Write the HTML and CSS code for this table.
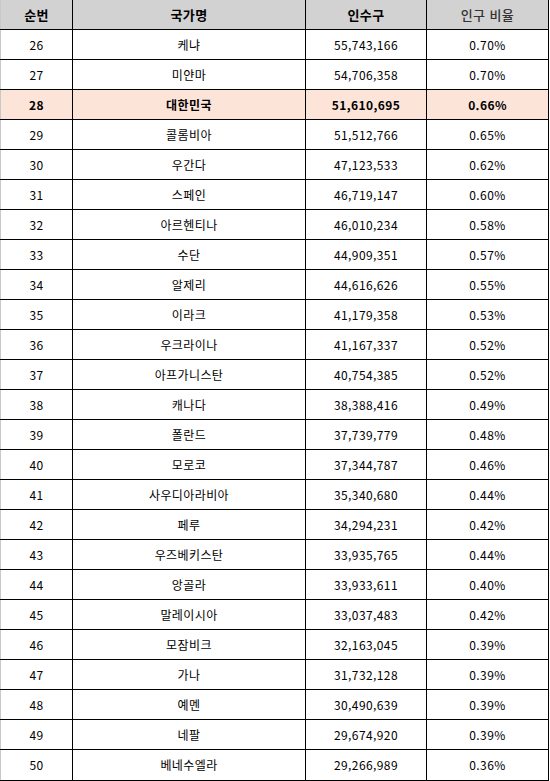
FILE: index.html
```html
<!DOCTYPE html>
<html lang="ko">
<head>
<meta charset="utf-8">
<link rel="stylesheet" href="styles.css">
</head>
<body>
<table class="pop">
<colgroup><col class="c1"><col class="c2"><col class="c3"><col class="c4"></colgroup>
<thead>
<tr><th>순번</th><th>국가명</th><th>인수구</th><th class="light">인구 비율</th></tr>
</thead>
<tbody>
<tr><td>26</td><td>케냐</td><td>55,743,166</td><td>0.70%</td></tr>
<tr><td>27</td><td>미얀마</td><td>54,706,358</td><td>0.70%</td></tr>
<tr class="hl"><td>28</td><td>대한민국</td><td>51,610,695</td><td>0.66%</td></tr>
<tr><td>29</td><td>콜롬비아</td><td>51,512,766</td><td>0.65%</td></tr>
<tr><td>30</td><td>우간다</td><td>47,123,533</td><td>0.62%</td></tr>
<tr><td>31</td><td>스페인</td><td>46,719,147</td><td>0.60%</td></tr>
<tr><td>32</td><td>아르헨티나</td><td>46,010,234</td><td>0.58%</td></tr>
<tr><td>33</td><td>수단</td><td>44,909,351</td><td>0.57%</td></tr>
<tr><td>34</td><td>알제리</td><td>44,616,626</td><td>0.55%</td></tr>
<tr><td>35</td><td>이라크</td><td>41,179,358</td><td>0.53%</td></tr>
<tr><td>36</td><td>우크라이나</td><td>41,167,337</td><td>0.52%</td></tr>
<tr><td>37</td><td>아프가니스탄</td><td>40,754,385</td><td>0.52%</td></tr>
<tr><td>38</td><td>캐나다</td><td>38,388,416</td><td>0.49%</td></tr>
<tr><td>39</td><td>폴란드</td><td>37,739,779</td><td>0.48%</td></tr>
<tr><td>40</td><td>모로코</td><td>37,344,787</td><td>0.46%</td></tr>
<tr><td>41</td><td>사우디아라비아</td><td>35,340,680</td><td>0.44%</td></tr>
<tr><td>42</td><td>페루</td><td>34,294,231</td><td>0.42%</td></tr>
<tr><td>43</td><td>우즈베키스탄</td><td>33,935,765</td><td>0.44%</td></tr>
<tr><td>44</td><td>앙골라</td><td>33,933,611</td><td>0.40%</td></tr>
<tr><td>45</td><td>말레이시아</td><td>33,037,483</td><td>0.42%</td></tr>
<tr><td>46</td><td>모잠비크</td><td>32,163,045</td><td>0.39%</td></tr>
<tr><td>47</td><td>가나</td><td>31,732,128</td><td>0.39%</td></tr>
<tr><td>48</td><td>예멘</td><td>30,490,639</td><td>0.39%</td></tr>
<tr><td>49</td><td>네팔</td><td>29,674,920</td><td>0.39%</td></tr>
<tr><td>50</td><td>베네수엘라</td><td>29,266,989</td><td>0.36%</td></tr>
</tbody>
</table>
</body>
</html>
```
FILE: styles.css
```css
html, body {
  margin: 0;
  padding: 0;
  background: #ffffff;
}
body {
  font-family: "Noto Sans CJK KR", "Noto Sans", sans-serif;
  font-size: 12px;
  color: #000000;
}
.pop {
  border-collapse: collapse;
  table-layout: fixed;
  width: 549px;
  border-left: 1px solid #c8c8c8;
}
.c1 { width: 72px; }
.c2 { width: 233px; }
.c3 { width: 121px; }
.c4 { width: 122px; }
.pop th,
.pop td {
  height: 29px;
  padding: 0;
  text-align: center;
  vertical-align: middle;
  line-height: 14px;
  letter-spacing: 0.4px;
  border-right: 1px solid #000000;
  border-bottom: 1px solid #000000;
  border-left: 1px solid #000000;
}
.pop tbody tr:last-child td {
  height: 30px;
}
.pop th:first-child,
.pop td:first-child {
  border-left: 1px solid #c8c8c8;
}
.pop th {
  background: #d2d2d2;
  font-weight: 700;
  font-size: 13px;
}
.pop th.light {
  font-weight: 500;
  color: #333333;
}
.pop tr.hl td {
  background: #fde4d8;
  font-weight: 700;
}
```
